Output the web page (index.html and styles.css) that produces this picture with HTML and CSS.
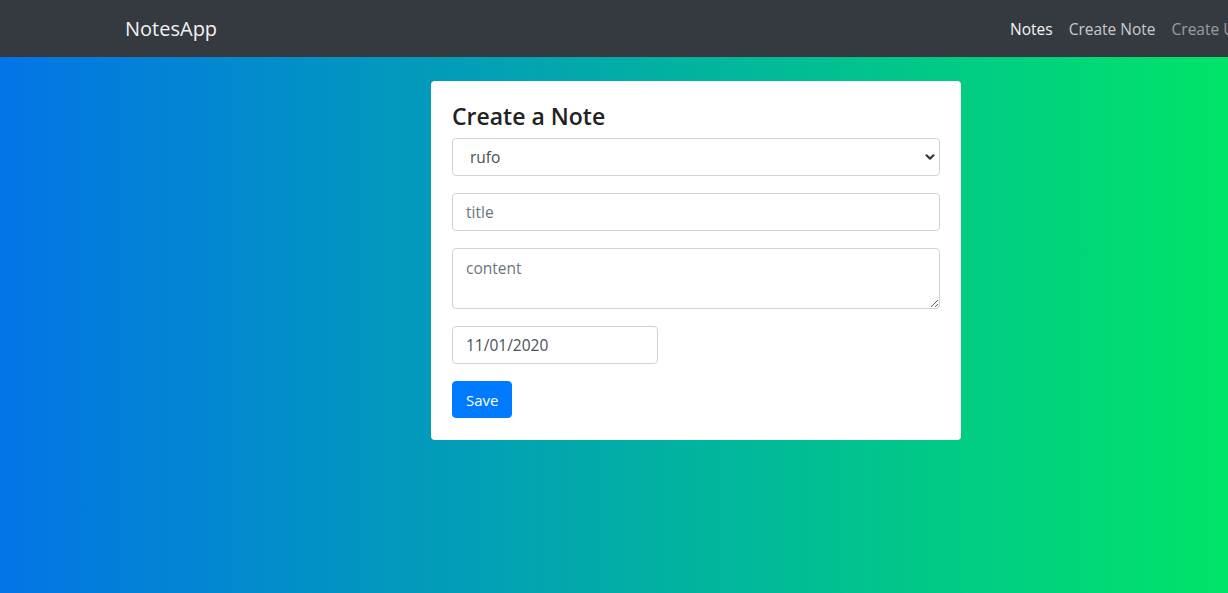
FILE: index.html
```html
<!DOCTYPE html>
<html lang="en">
<head>
<meta charset="utf-8">
<title>NotesApp</title>
<link rel="stylesheet" href="styles.css">
</head>
<body>
<nav class="navbar">
  <a class="brand" href="#">NotesApp</a>
  <ul class="nav-links">
    <li><a class="nav-link active" href="#">Notes</a></li>
    <li><a class="nav-link" href="#">Create Note</a></li>
    <li><a class="nav-link dim" href="#">Create User</a></li>
  </ul>
</nav>
<main class="page">
  <div class="card">
    <h4 class="card-title">Create a Note</h4>
    <form class="form">
      <div class="select-wrap">
        <select class="control select">
          <option>rufo</option>
        </select>
        <svg class="chevron" width="12" height="12" viewBox="0 0 12 12"><path d="M2.5 4.3 L6 7.6 L9.5 4.3" fill="none" stroke="#343a40" stroke-width="2.2" stroke-linecap="round" stroke-linejoin="round"/></svg>
      </div>
      <input class="control" type="text" placeholder="title">
      <textarea class="control textarea" placeholder="content"></textarea>
      <input class="control date" type="text" value="11/01/2020">
      <button class="btn" type="button">Save</button>
    </form>
  </div>
</main>
</body>
</html>
```

FILE: styles.css
```css
* { box-sizing: border-box; }
html, body { margin: 0; padding: 0; height: 100%; }
body {
  font-family: "Open Sans", "Noto Sans", sans-serif;
  color: #212529;
  background: linear-gradient(to right, #0374e6, #00e469);
  overflow: hidden;
  width: 1228px;
}
.navbar {
  height: 57px;
  background: #343a40;
  display: flex;
  align-items: center;
  padding-left: 125px;
  white-space: nowrap;
  overflow: hidden;
}
.brand {
  flex-shrink: 0;
  width: 92px;
  color: #f2f2f2;
  font-size: 20px;
  text-decoration: none;
  margin-top: -1px;
}
.nav-links {
  flex-shrink: 0;
  list-style: none;
  margin: 0 0 0 793px;
  padding: 0;
  display: flex;
  gap: 16px;
}
.nav-link {
  color: rgba(255,255,255,.74);
  text-decoration: none;
  font-size: 15.5px;
}
.nav-link.active { color: #f4f4f4; }
.nav-link.dim { color: rgba(255,255,255,.5); }
.page {
  padding-top: 24px;
  padding-left: 431px;
}
.card {
  width: 530px;
  background: #fff;
  border-radius: 4px;
  padding: 21px 21px 22px;
}
.card-title {
  margin: 0 0 7px;
  font-size: 23px;
  font-weight: 600;
  line-height: 29px;
  color: #222;
}
.form {
  display: flex;
  flex-direction: column;
  align-items: flex-start;
  gap: 17px;
}
.select-wrap {
  position: relative;
  width: 100%;
}
.control {
  display: block;
  width: 100%;
  height: 38px;
  border: 1px solid #ced4da;
  border-radius: 4px;
  padding: 6px 13px;
  font-family: inherit;
  font-size: 15.5px;
  color: #495057;
  background: #fff;
  outline: none;
}
.control::placeholder { color: #6c757d; }
.select {
  appearance: none;
  -webkit-appearance: none;
  padding-left: 17px;
}
.chevron {
  position: absolute;
  right: 4px;
  top: 13px;
}
.textarea {
  height: 61px;
  resize: vertical;
  padding-top: 8px;
}
.date { width: 206px; }
.btn {
  height: 37px;
  padding: 0 13px;
  background: #007bff;
  color: #fff;
  border: 1px solid #007bff;
  border-radius: 4px;
  font-family: inherit;
  font-size: 15px;
}
```
